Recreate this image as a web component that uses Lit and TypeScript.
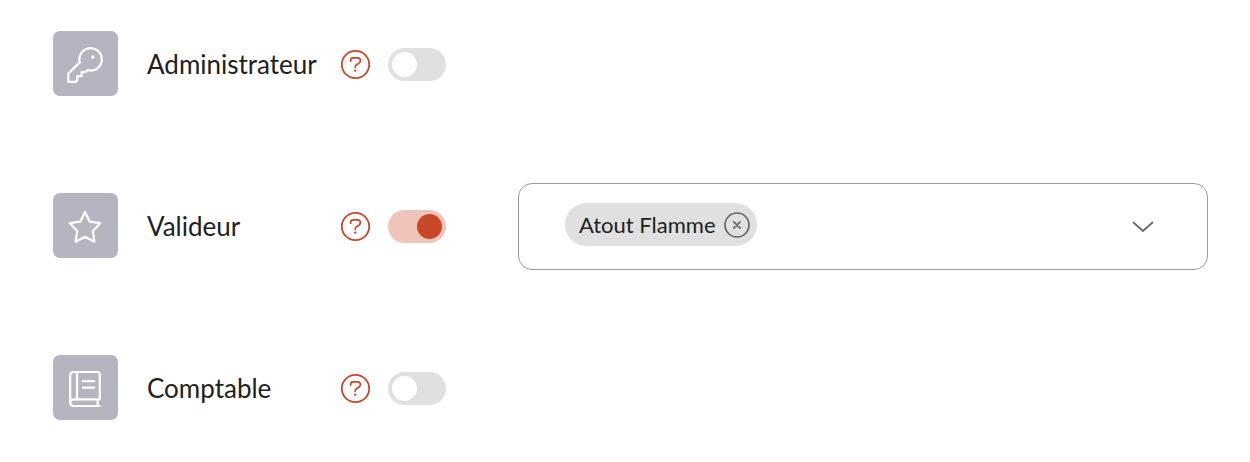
import { LitElement, html, css, svg, nothing, TemplateResult } from "lit";
import { customElement, property, state } from "lit/decorators.js";

type Role = {
  id: string;
  label: string;
  icon: string;
  enabled: boolean;
  scopes: string[];
};

const ICONS: Record<string, TemplateResult> = {
  key: svg`
    <path d="M15.3 50.8V42.6L26.8 31.4A11.2 11.2 0 1 1 37.6 39.6L34.4 39L32.2 41.2H28.6V45.2H24.2V49.2L22.8 50.8Z"/>
    <circle cx="39.8" cy="26" r="1.8" fill="currentColor" stroke="none"/>`,
  star: svg`
    <path d="M32 19L36.6 28.6L47.2 30.2L39.8 38L41.4 48.8L32 43.8L22.6 48.8L24.2 38L16.8 30.2L27.4 28.6Z"/>`,
  book: svg`
    <path d="M17.2 47.5V20.6Q17.2 17 20.8 17H44.2Q46.8 17 46.8 19.6V44.3H20.6Q17.2 44.3 17.2 47.6Q17.2 51 20.6 51H46.8"/>
    <path d="M24 17V44.3M29.8 26.2H41.2M29.8 32.6H41.2M44.6 44.3V51"/>`,
};

@customElement("role-toggle")
export class RoleToggle extends LitElement {
  @property() label = "";
  @property({ type: Boolean }) checked = false;

  static styles = css`
    :host {
      display: flex;
    }
    .switch {
      appearance: none;
      box-sizing: border-box;
      display: flex;
      width: 58px;
      height: 33px;
      margin: 0;
      padding: 4px;
      border-radius: 17px;
      background: #e0e0e0;
      cursor: pointer;
    }
    .switch::before {
      content: "";
      width: 25px;
      height: 25px;
      border-radius: 50%;
      background: #fff;
    }
    .switch:checked {
      justify-content: flex-end;
      background: #efc4bb;
    }
    .switch:checked::before {
      background: #c74728;
    }
  `;

  private onChange(e: Event) {
    this.checked = (e.target as HTMLInputElement).checked;
    this.dispatchEvent(new CustomEvent("toggle", { detail: this.checked }));
  }

  render() {
    return html`<input
      class="switch"
      type="checkbox"
      role="switch"
      aria-label=${this.label}
      .checked=${this.checked}
      @change=${this.onChange}
    />`;
  }
}

@customElement("scope-select")
export class ScopeSelect extends LitElement {
  @property() label = "";
  @property({ attribute: false }) values: string[] = [];

  static styles = css`
    :host {
      display: block;
    }
    .field {
      display: grid;
      align-items: center;
    }
    .field > * {
      grid-area: 1 / 1;
    }
    .select {
      appearance: none;
      align-self: stretch;
      width: 100%;
      border: 1px solid #9b9b9b;
      border-radius: 14px;
      background: #fff;
      font: inherit;
      cursor: pointer;
    }
    .content {
      display: flex;
      align-items: center;
      min-height: 43px;
      padding: 20px 54px 24px 47px;
      pointer-events: none;
    }
    .chips {
      display: flex;
      flex: 1;
      flex-wrap: wrap;
      gap: 8px;
    }
    .chip {
      display: flex;
      align-items: center;
      gap: 8px;
      height: 43px;
      padding: 0 7px 0 14px;
      border-radius: 22px;
      background: #e0e0e0;
      font-size: 22px;
      line-height: 26px;
      box-sizing: border-box;
    }
    .remove {
      display: flex;
      padding: 0;
      border: 0;
      background: none;
      color: #666;
      cursor: pointer;
      pointer-events: auto;
    }
    .line {
      fill: none;
      stroke: currentColor;
      stroke-width: 1.7;
      stroke-linecap: round;
    }
    .chevron {
      justify-self: end;
      margin-right: 54px;
      color: #666;
      pointer-events: none;
    }
  `;

  private onSelect(e: Event) {
    const select = e.target as HTMLSelectElement;
    if (select.value && !this.values.includes(select.value)) {
      this.values = [...this.values, select.value];
    }
    select.value = "";
  }

  private remove(value: string) {
    this.values = this.values.filter((v) => v !== value);
  }

  render() {
    return html`
      <div class="field">
        <select class="select" aria-label=${this.label} @change=${this.onSelect}>
          <option value="" selected></option>
          <option value="Atout Flamme">Atout Flamme</option>
        </select>
        <div class="content">
          <div class="chips">
            ${this.values.map(
              (value) => html`
                <span class="chip">
                  <span>${value}</span>
                  <button
                    class="remove"
                    type="button"
                    aria-label="Retirer ${value}"
                    @click=${() => this.remove(value)}
                  >
                    <svg class="line" width="26" height="26" viewBox="0 0 26 26" aria-hidden="true">
                      <circle cx="13" cy="13" r="12" />
                      <path d="M9.8 9.8L16.2 16.2M16.2 9.8L9.8 16.2" />
                    </svg>
                  </button>
                </span>
              `
            )}
          </div>
        </div>
        <svg class="line chevron" width="22" height="12" viewBox="0 0 22 12" aria-hidden="true">
          <path d="M1.5 1.5L11 10L20.5 1.5" />
        </svg>
      </div>
    `;
  }
}

@customElement("app-root")
export class AppRoot extends LitElement {
  @state() private roles: Role[] = [
    { id: "admin", label: "Administrateur", icon: "key", enabled: false, scopes: [] },
    { id: "validator", label: "Valideur", icon: "star", enabled: true, scopes: ["Atout Flamme"] },
    { id: "accountant", label: "Comptable", icon: "book", enabled: false, scopes: [] },
  ];

  static styles = css`
    :host {
      display: block;
      background: #fff;
      color: #212121;
      font-family: Lato, "Liberation Sans", sans-serif;
      font-size: 26px;
      line-height: 32px;
    }
    .roles {
      display: grid;
      gap: 75px;
      margin: 0;
      padding: 21px 42px 21px 53px;
      list-style: none;
    }
    .role {
      display: grid;
      grid-template-columns: 65px 222px 48px 58px minmax(0, 1fr);
      align-items: center;
      min-height: 87px;
    }
    .tile,
    .name {
      margin-bottom: 2px;
    }
    .tile {
      display: flex;
      border-radius: 7px;
      background: #b5b4c1;
      color: #fff;
    }
    .name {
      padding-left: 29px;
    }
    .glyph {
      fill: none;
      stroke: currentColor;
      stroke-width: 2.2;
      stroke-linecap: round;
      stroke-linejoin: round;
    }
    .help {
      display: flex;
      justify-self: start;
      padding: 0;
      border: 0;
      background: none;
      color: #c74728;
      cursor: pointer;
    }
    .scopes {
      margin-left: 72px;
    }
  `;

  private setEnabled(id: string, enabled: boolean) {
    this.roles = this.roles.map((r) => (r.id === id ? { ...r, enabled } : r));
  }

  render() {
    return html`
      <ul class="roles">
        ${this.roles.map(
          (role) => html`
            <li class="role">
              <span class="tile">
                <svg class="glyph" width="65" height="65" viewBox="0 0 65 65" aria-hidden="true">
                  ${ICONS[role.icon]}
                </svg>
              </span>
              <span class="name">${role.label}</span>
              <button class="help" type="button" aria-label="Aide : ${role.label}">
                <svg class="glyph" width="31" height="31" viewBox="0 0 31 31" aria-hidden="true">
                  <circle cx="15.5" cy="15.5" r="13.7" stroke-width="1.8" />
                  <path
                    d="M10.6 12.2V11.4Q10.6 8.9 13.2 8.9H17.4Q20.4 8.9 20.4 11.6Q20.4 13.3 18.6 14.4L16.7 15.5Q15.2 16.4 15.2 18.3"
                    stroke-width="1.7"
                  />
                  <circle cx="15.2" cy="21.6" r="1.2" fill="currentColor" stroke="none" />
                </svg>
              </button>
              <role-toggle
                label=${role.label}
                ?checked=${role.enabled}
                @toggle=${(e: CustomEvent<boolean>) => this.setEnabled(role.id, e.detail)}
              ></role-toggle>
              ${role.enabled
                ? html`<scope-select
                    class="scopes"
                    label="Périmètre ${role.label}"
                    .values=${role.scopes}
                  ></scope-select>`
                : nothing}
            </li>
          `
        )}
      </ul>
    `;
  }
}
